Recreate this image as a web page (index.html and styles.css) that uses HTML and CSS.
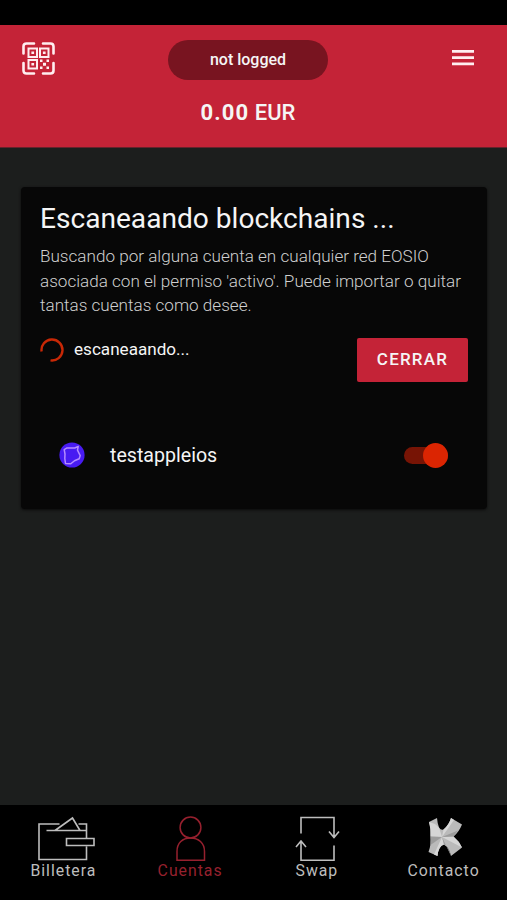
FILE: index.html
```
<!DOCTYPE html>
<html lang="es">
<head>
  <meta charset="UTF-8" />
  <meta name="viewport" content="width=device-width, initial-scale=1.0"/>
  <title>Cuentas</title>
  <link rel="stylesheet" href="styles.css">
</head>
<body>
  <div class="app">
    <header class="header">
      <div class="toolbar">
        <button class="icon-btn" aria-label="QR">
          <svg class="qr" viewBox="0 0 33 33" fill="none" stroke="currentColor">
            <path stroke-width="2.6" stroke-linecap="round" d="M1.5 11.5V4.5Q1.5 1.5 4.5 1.5H12M21 1.5H28.5Q31.5 1.5 31.5 4.5V11.5M31.5 21V28.5Q31.5 31.5 28.5 31.5H21M12 31.5H4.5Q1.5 31.5 1.5 28.5V21" />
            <path stroke-width="2" d="M6.500 6.500h8.500v8.500h-8.500zM18 6.500h8.500v8.500h-8.500zM6.500 18h8.500v8.500h-8.500z" />
            <path fill="currentColor" stroke="none" d="M9.400 9.400h2.700v2.700h-2.700zM20.900 9.400h2.700v2.700h-2.700zM9.400 20.900h2.700v2.700h-2.700zM18 17.500h2.500v2.500h-2.500zM24.500 17.500h2.500v2.500h-2.500zM21 20.700h3v3h-3zM18 24.500h2.500v2.500h-2.500zM24.500 24.500h2.500v2.500h-2.500z" />
          </svg>
        </button>
        <div class="account">not logged</div>
        <button class="icon-btn" aria-label="Menu">
          <svg class="menu" viewBox="0 0 22 16" fill="currentColor">
            <path d="M0 0h22v2.700H0zM0 6.300h22v2.700H0zM0 12.600h22v2.700H0z" />
          </svg>
        </button>
      </div>
      <div class="balance"><b>0.00</b> EUR</div>
    </header>

    <main class="content">
      <section class="card">
        <h1 class="title">Escaneaando blockchains ...</h1>
        <p class="text">Buscando por alguna cuenta en cualquier red EOSIO asociada con el permiso 'activo'. Puede importar o quitar tantas cuentas como desee.</p>

        <div class="status">
          <div class="scanning">
            <svg class="spinner" viewBox="0 0 24 24">
              <path d="M1.600 13.500A10.500 10.500 0 1 1 10.500 22.400" fill="none" stroke="#c82806" stroke-width="2.400" />
            </svg>
            <span class="scanning-label">escaneaando...</span>
          </div>
          <button class="close">CERRAR</button>
        </div>

        <div class="row">
          <svg class="chain" viewBox="0 0 26 26">
            <circle cx="13" cy="13" r="12.600" fill="#481bf2" />
            <path d="M5.200 7.600L8 5.900L15.800 6L19.200 4.400L18.500 8.200L21.200 13.600L20.200 16.800L15.500 18.700L11.800 21.800L6.500 21.500L5.800 16.500L6 12Z" fill="none" stroke="#b48cff" stroke-width="1.500" stroke-linejoin="round" />
          </svg>
          <span class="name">testappleios</span>
          <div class="toggle"><div class="knob"></div></div>
        </div>
      </section>
    </main>

    <nav class="tabs">
      <a class="tab">
        <svg class="tab-icon" viewBox="0 0 60 48" fill="none" stroke="currentColor" stroke-width="1.600">
          <path d="M26.500 8H6V43.500H53.500V30.500M45.500 8H53.500V22.500M13.500 14.500H53.500M22 14.500L39.500 2L47 14.500M33.500 22.500H61V29.500H33.500Z" />
        </svg>
        <span>Billetera</span>
      </a>
      <a class="tab active">
        <svg class="tab-icon" viewBox="0 0 60 48" fill="none" stroke="currentColor" stroke-width="1.500">
          <circle cx="30.500" cy="11.500" r="10.400" />
          <path d="M17 44.200V35.500C17 27 22.500 22 30.500 22S44.500 27 44.500 35.500V44.200Z" />
        </svg>
        <span>Cuentas</span>
      </a>
      <a class="tab">
        <svg class="tab-icon" viewBox="0 0 60 48" fill="none" stroke="currentColor" stroke-width="1.600">
          <path d="M14 17.500V1.500H47V21M47 29.500V44.200H14V25.500M42 15.500L47 21.500L52 15.500M9 31L14 25L19 31" />
        </svg>
        <span>Swap</span>
      </a>
      <a class="tab">
        <svg class="tab-icon" viewBox="0 0 60 48">
          <path fill="#bababa" d="M15 6L23 2Q23.500 8 25 11.500Q27 14.500 29.500 13.500Q35 9 37 2L48 8.500Q45 16 39.500 20.500Q45 25 48 31.500L37 40Q35.500 32 30 28.500Q24.500 30 23.500 40L14.500 36Q17.500 28 16.500 20.500Q17 12 15 6Z" />
          <path fill="#d6d6d6" d="M15 6Q17 13 16.500 20.500L28 21L25 11.500L21 8ZM29.500 13.500Q35 9 37 2L40 4L28 21ZM28 21L30 28.500Q24.500 30 23.500 40L20 38.500ZM28 21L48 31.500Q45 25 39.500 20.500Z" />
          <path fill="#9c9c9c" d="M28 21L44 14.500L39.500 20.500ZM28 21L37 40Q35.500 32 30 28.500ZM16.500 20.500L28 21L16.500 29Z" />
        </svg>
        <span>Contacto</span>
      </a>
    </nav>
  </div>
</body>
</html>
```
FILE: styles.css
```
html, body {
  margin: 0;
  padding: 0;
  height: 100%;
  background: #000;
  color: #f5f5f5;
  font-family: Roboto, sans-serif;
  overflow: hidden;
}

* {
  box-sizing: border-box;
}

button {
  border: none;
  padding: 0;
  background: none;
  color: inherit;
  font-family: inherit;
}

svg {
  display: block;
}

.app {
  display: flex;
  flex-direction: column;
  height: 100%;
  padding-top: 25px;
}

.header {
  height: 123px;
  padding: 15px 33px 0 22px;
  background: #c42337;
  border-bottom: 1px solid #65222b;
}

.toolbar {
  display: grid;
  grid-template-columns: 1fr 160px 1fr;
  height: 40px;
}

.icon-btn {
  justify-self: start;
  align-self: start;
  color: #ffeef0;
}

.icon-btn:last-child {
  justify-self: end;
}

.qr {
  width: 33px;
  height: 33px;
  margin-top: 2px;
}

.menu {
  width: 22px;
  height: 16px;
  margin-top: 10px;
}

.account {
  height: 40px;
  border-radius: 20px;
  background: #781420;
  font-size: 16px;
  font-weight: 500;
  line-height: 40px;
  text-align: center;
}

.balance {
  margin-top: 19px;
  font-size: 22px;
  font-weight: 500;
  line-height: 28px;
  text-align: center;
}

.balance b {
  font-weight: 700;
  letter-spacing: 1.1px;
}

.content {
  flex: 1;
  padding: 39px 20px 0 21px;
  background: #1c1e1d;
}

.card {
  height: 322px;
  padding: 15px 19px;
  border-radius: 4px;
  background: #070707;
  box-shadow: 0 1px 3px #0a0a0a;
}

.title {
  margin: 0;
  font-size: 28.1px;
  font-weight: 400;
  line-height: 34px;
  white-space: nowrap;
}

.text {
  margin: 8px -10px 0 0;
  color: #d0d0d0;
  font-size: 17.1px;
  font-weight: 300;
  line-height: 24.5px;
}

.status {
  display: flex;
  justify-content: space-between;
  margin-top: 20.5px;
}

.scanning {
  display: flex;
  align-items: center;
  gap: 10px;
  height: 24px;
  font-size: 17.1px;
}

.scanning-label {
  padding-bottom: 2px;
}

.spinner {
  width: 24px;
  height: 24px;
}

.close {
  width: 111px;
  height: 44px;
  padding-bottom: 2px;
  border-radius: 2px;
  background: #c42337;
  font-size: 17px;
  font-weight: 500;
  letter-spacing: 1.2px;
}

.row {
  display: flex;
  align-items: center;
  height: 40px;
  margin-top: 53px;
  padding: 0 20px 0 19px;
}

.chain {
  width: 26px;
  height: 26px;
}

.name {
  flex: 1;
  margin-left: 25px;
  font-size: 19.6px;
}

.toggle {
  display: flex;
  align-items: center;
  justify-content: flex-end;
  width: 44px;
  height: 17px;
  border-radius: 9px;
  background: #771405;
}

.knob {
  width: 25px;
  height: 25px;
  flex: none;
  border-radius: 50%;
  background: #db2502;
}

.tabs {
  display: flex;
  height: 95px;
  background: #000;
}

.tab {
  display: flex;
  flex: 1;
  flex-direction: column;
  align-items: center;
  padding-top: 11px;
  color: #bdbdbd;
  font-size: 15.8px;
  font-weight: 400;
  letter-spacing: 1px;
  line-height: 20px;
}

.tab-icon {
  width: 60px;
  height: 48px;
  margin-bottom: -3px;
  overflow: visible;
}

.active {
  color: #96202e;
}
```
